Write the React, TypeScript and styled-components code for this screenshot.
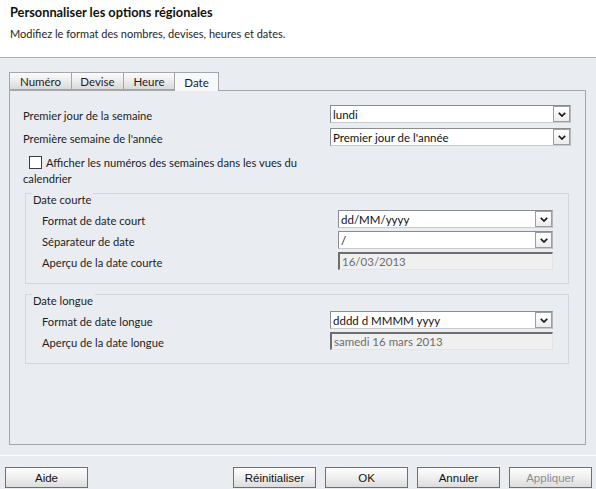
import { FC } from "react";
import styled, { createGlobalStyle } from "styled-components";

const GlobalStyle = createGlobalStyle`
  html, body {
    margin: 0;
    padding: 0;
    background: #e9ecf0;
  }
  body {
    font-family: Lato, "Open Sans", sans-serif;
    font-size: 11.2px;
    color: #1e1e1e;
  }
  * {
    box-sizing: border-box;
  }
`;

const tabs = ["Numéro", "Devise", "Heure", "Date"];
const tabWidths = [63, 53, 52, 45];

const Chevron: FC = () => (
  <svg width="8" height="5" viewBox="0 0 8 5">
    <polyline
      points="0.8,0.8 4,4 7.2,0.8"
      fill="none"
      stroke="#1a1a1a"
      strokeWidth="1.7"
    />
  </svg>
);

const Select: FC<{ value: string; width: number }> = ({ value, width }) => (
  <SelectBox $width={width}>
    <SelectText>{value}</SelectText>
    <ArrowButton>
      <Chevron />
    </ArrowButton>
  </SelectBox>
);

const App: FC = () => {
  return (
    <Page>
      <GlobalStyle />
      <Header>
        <Title>Personnaliser les options régionales</Title>
        <Subtitle>Modifiez le format des nombres, devises, heures et dates.</Subtitle>
      </Header>

      <Main>
        <TabRow>
          {tabs.map((t, i) => (
            <Tab key={t} $active={t === "Date"} $width={tabWidths[i]}>
              {t}
            </Tab>
          ))}
        </TabRow>

        <Panel>
          <TopRows>
            <Row $labelWidth={307}>
              <Label>Premier jour de la semaine</Label>
              <Select value="lundi" width={241} />
            </Row>
            <Row $labelWidth={307}>
              <Label>Première semaine de l'année</Label>
              <Select value="Premier jour de l'année" width={241} />
            </Row>
          </TopRows>

          <CheckLine>
            <CheckBox />
            Afficher les numéros des semaines dans les vues du calendrier
          </CheckLine>

          <Group>
            <Legend>Date courte</Legend>
            <GroupRows>
              <Row $labelWidth={296}>
                <Label>Format de date court</Label>
                <Select value="dd/MM/yyyy" width={215} />
              </Row>
              <Row $labelWidth={296}>
                <Label>Séparateur de date</Label>
                <Select value="/" width={215} />
              </Row>
              <Row $labelWidth={296}>
                <Label>Aperçu de la date courte</Label>
                <Preview $width={215}>16/03/2013</Preview>
              </Row>
            </GroupRows>
          </Group>

          <Group>
            <Legend>Date longue</Legend>
            <GroupRows>
              <Row $labelWidth={288}>
                <Label>Format de date longue</Label>
                <Select value="dddd d MMMM yyyy" width={223} />
              </Row>
              <Row $labelWidth={288}>
                <Label>Aperçu de la date longue</Label>
                <Preview $width={223}>samedi 16 mars 2013</Preview>
              </Row>
            </GroupRows>
          </Group>
        </Panel>
      </Main>

      <Footer>
        <Button>Aide</Button>
        <Spacer />
        <Button>Réinitialiser</Button>
        <Button>OK</Button>
        <Button>Annuler</Button>
        <Button $disabled>Appliquer</Button>
      </Footer>
    </Page>
  );
};

const Page = styled.div`
  width: 596px;
  height: 489px;
  overflow: hidden;
  display: flex;
  flex-direction: column;
`;

const Header = styled.header`
  height: 58px;
  background: #ffffff;
  border-bottom: 1px solid #aeb1b5;
  padding: 4px 10px 0 10px;
`;

const Title = styled.h1`
  margin: 0;
  font-size: 12.8px;
  font-weight: 700;
  line-height: 17px;
  color: #111;
`;

const Subtitle = styled.p`
  margin: 5px 0 0;
  font-size: 11px;
  line-height: 15px;
  color: #1e1e1e;
`;

const Main = styled.main`
  padding: 14px 10px 0 9px;
`;

const TabRow = styled.div`
  display: flex;
  height: 18px;
`;

const Tab = styled.div<{ $active?: boolean; $width: number }>`
  width: ${(p) => p.$width}px;
  height: ${(p) => (p.$active ? 19 : 18)}px;
  margin-left: -1px;
  &:first-child {
    margin-left: 0;
  }
  display: flex;
  align-items: center;
  justify-content: center;
  border: 1px solid #a3a6aa;
  border-bottom: ${(p) => (p.$active ? "none" : "1px solid #a3a6aa")};
  background: ${(p) =>
    p.$active
      ? "#f6f8fa"
      : "linear-gradient(to bottom, #fbfbfb 0%, #ececec 50%, #d9d9d9 100%)"};
  position: relative;
  z-index: ${(p) => (p.$active ? 2 : 1)};
  font-size: 11.5px;
  color: #1e1e1e;
  padding-top: 1px;
`;

const Panel = styled.section`
  width: 577px;
  height: 355px;
  border: 1px solid #a3a6aa;
  padding: 14px 14px 0 13px;
`;

const TopRows = styled.div`
  display: flex;
  flex-direction: column;
  gap: 5px;
`;

const Row = styled.div<{ $labelWidth: number }>`
  display: grid;
  grid-template-columns: ${(p) => p.$labelWidth}px auto;
  align-items: center;
  height: 18px;
`;

const Label = styled.span`
  padding-top: 3px;
  white-space: nowrap;
`;

const SelectBox = styled.div<{ $width: number }>`
  width: ${(p) => p.$width}px;
  height: 18px;
  display: flex;
  align-items: stretch;
  background: #ffffff;
  border: 1px solid #8a8c8f;
  border-bottom-color: #c9cbcd;
  border-right-color: #b5b7ba;
`;

const SelectText = styled.span`
  flex: 1;
  display: flex;
  align-items: center;
  padding-left: 2px;
  white-space: nowrap;
  overflow: hidden;
  font-size: 11.5px;
  color: #111;
`;

const ArrowButton = styled.span`
  width: 17px;
  display: flex;
  align-items: center;
  justify-content: center;
  border: 1px solid #9c9ea1;
  background: linear-gradient(to bottom, #ffffff, #ececec);
`;

const Preview = styled.div<{ $width: number }>`
  width: ${(p) => p.$width}px;
  height: 18px;
  display: flex;
  align-items: center;
  padding-left: 2px;
  background: #f0f0f0;
  border-top: 2px solid #6e6e6e;
  border-left: 2px solid #6e6e6e;
  border-right: 1px solid #e4e4e4;
  border-bottom: 1px solid #e4e4e4;
  font-size: 11.5px;
  color: #6d6d6d;
`;

const CheckLine = styled.div`
  width: 285px;
  margin-top: 9px;
  line-height: 16px;
`;

const CheckBox = styled.span`
  display: inline-block;
  width: 13px;
  height: 13px;
  margin: 0 4px 0 6px;
  vertical-align: -2px;
  background: #ffffff;
  border: 1px solid #3c3c3c;
`;

const Group = styled.fieldset`
  margin: 6px 0 0 2px;
  width: 544px;
  padding: 0 15px 13px 16px;
  border: 1px solid #d3d6da;
  display: flex;
  flex-direction: column;
  & + & {
    margin-top: 10px;
  }
`;

const Legend = styled.span`
  align-self: flex-start;
  margin: -1px 0 0 -10px;
  padding: 0 2px 0 1px;
  background: #e9ecf0;
  line-height: 13px;
`;

const GroupRows = styled.div`
  margin-top: 4px;
  display: flex;
  flex-direction: column;
  gap: 3px;
`;

const Footer = styled.footer`
  margin-top: 10px;
  border-top: 1px solid #ffffff;
  padding: 11px 4px 0 5px;
  display: flex;
  gap: 9px;
`;

const Spacer = styled.div`
  flex: 1;
`;

const Button = styled.button<{ $disabled?: boolean }>`
  width: 83px;
  height: 21px;
  padding: 0;
  border: 1px solid #6f6f6f;
  border-radius: 0;
  background: linear-gradient(to bottom, #fdfdfd 0%, #efefef 50%, #dcdcdc 100%);
  font-family: "Liberation Sans", Arial, sans-serif;
  font-size: 11.5px;
  color: ${(p) => (p.$disabled ? "#8d8d8d" : "#111")};
`;

export default App;
